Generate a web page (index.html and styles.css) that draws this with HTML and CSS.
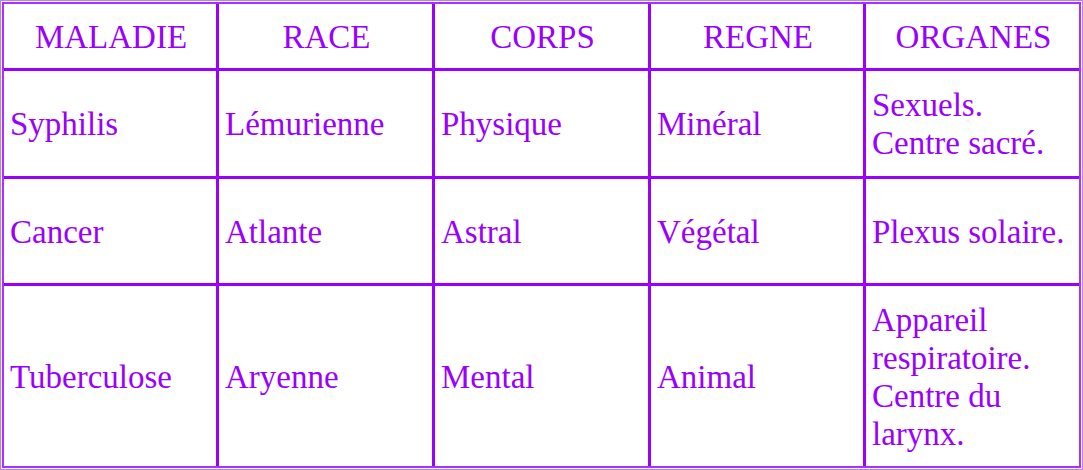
FILE: index.html
```html
<!DOCTYPE html>
<html>
<head>
<meta charset="utf-8">
<link rel="stylesheet" href="styles.css">
</head>
<body>
<div class="frame">
<table class="grid">
<colgroup>
<col class="c1"><col class="c2"><col class="c3"><col class="c4"><col class="c5">
</colgroup>
<tr class="head">
<th>MALADIE</th><th>RACE</th><th>CORPS</th><th>REGNE</th><th class="last">ORGANES</th>
</tr>
<tr class="r2">
<td>Syphilis</td><td>Lémurienne</td><td>Physique</td><td>Minéral</td><td class="last">Sexuels.<br>Centre sacré.</td>
</tr>
<tr class="r3">
<td>Cancer</td><td>Atlante</td><td>Astral</td><td>Végétal</td><td class="last">Plexus solaire.</td>
</tr>
<tr class="r4">
<td class="bot">Tuberculose</td><td class="bot">Aryenne</td><td class="bot">Mental</td><td class="bot">Animal</td><td class="last bot">Appareil<br>respiratoire.<br>Centre du<br>larynx.</td>
</tr>
</table>
</div>
</body>
</html>
```

FILE: styles.css
```css
html, body {
  margin: 0;
  padding: 0;
  background: #ffffff;
}
.frame {
  width: 1083px;
  box-sizing: border-box;
  border: 1px solid #c27bff;
  padding: 1px;
}
.grid {
  width: 100%;
  table-layout: fixed;
  border-collapse: separate;
  border-spacing: 0;
  border: 2px solid #a633ff;
  font-family: "Liberation Serif", "Times New Roman", serif;
  font-size: 33px;
  line-height: 38px;
  color: #9900ff;
}
.c1 { width: 215px; }
.c2 { width: 216px; }
.c3 { width: 216px; }
.c4 { width: 215px; }
.c5 { width: auto; }
th, td {
  box-sizing: border-box;
  border-right: 3px solid #9900ff;
  border-bottom: 3px solid #9900ff;
  padding: 1px 4px 0 6px;
  vertical-align: middle;
  text-align: left;
  font-weight: normal;
}
th {
  text-align: center;
  height: 67px;
}
.r2 td { height: 108px; }
.r3 td { height: 107px; }
.r4 td { height: 180px; }
.last { border-right: none; }
.bot { border-bottom: none; }
```
